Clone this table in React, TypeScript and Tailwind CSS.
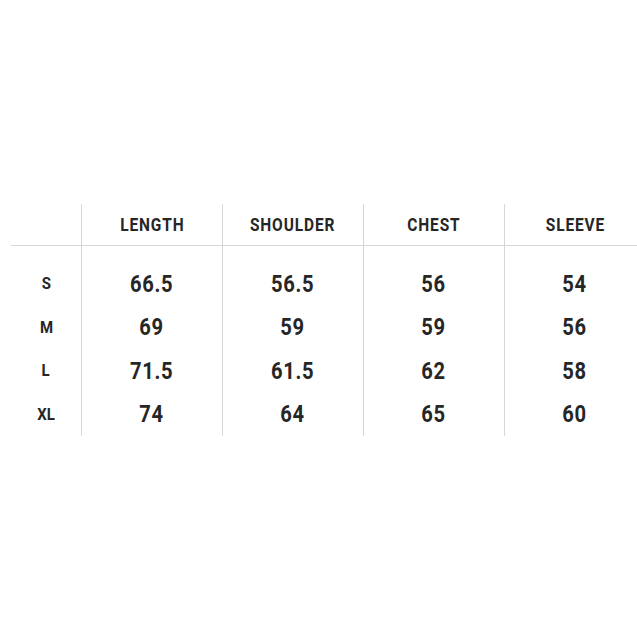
const HEADERS = ['LENGTH', 'SHOULDER', 'CHEST', 'SLEEVE'];

const ROWS: { size: string; values: string[] }[] = [
  { size: 'S', values: ['66.5', '56.5', '56', '54'] },
  { size: 'M', values: ['69', '59', '59', '56'] },
  { size: 'L', values: ['71.5', '61.5', '62', '58'] },
  { size: 'XL', values: ['74', '64', '65', '60'] },
];

const font = { fontFamily: 'Roboto, "Liberation Sans", sans-serif' };

export default function App() {
  return (
    <div className="w-[637px] h-[637px] bg-white overflow-hidden pt-[204px] pl-[11px] text-[#262626]" style={font}>
      {/* header */}
      <div className="grid grid-cols-[70px_141px_141px_141px_141px] h-[42px] border-b border-[#d6d6d6]">
        <div />
        {HEADERS.map((h) => (
          <div key={h} className="border-l border-[#d6d6d6] flex items-center justify-center text-[18px] font-bold">
            <span className="inline-block scale-x-[0.86] tracking-[1px]">{h}</span>
          </div>
        ))}
      </div>

      {/* body */}
      <div className="grid grid-cols-[70px_141px_141px_141px_141px]">
        <div className="pt-[16px] flex flex-col">
          {ROWS.map((r) => (
            <div key={r.size} className="h-[43.5px] flex items-center justify-center text-[17px] font-bold">
              <span className="inline-block scale-x-[0.88]">{r.size}</span>
            </div>
          ))}
        </div>
        {HEADERS.map((h, i) => (
          <div key={h} className="border-l border-[#d6d6d6] pt-[16px] flex flex-col">
            {ROWS.map((r) => (
              <div key={r.size} className="h-[43.5px] flex items-center justify-center text-[24px] font-bold">
                <span className="inline-block scale-x-[0.84] tracking-[0.8px]">{r.values[i]}</span>
              </div>
            ))}
          </div>
        ))}
      </div>
    </div>
  );
}
